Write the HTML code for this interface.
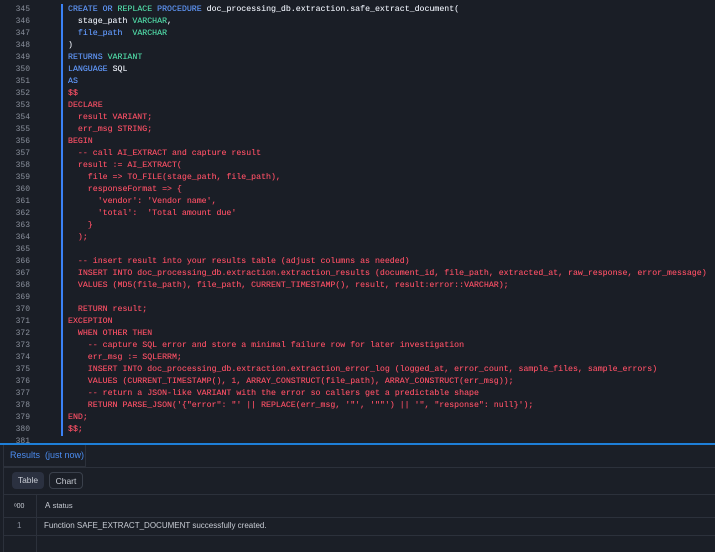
<!DOCTYPE html>
<html><head><meta charset="utf-8">
<style>
*{margin:0;padding:0;box-sizing:border-box}
html,body{width:715px;height:550px;overflow:hidden;background:#1a1e26}
.ed{position:absolute;left:0;top:4px;width:715px}
.ln{position:absolute;left:0;width:30px;text-align:right;color:#8a909c;font:8px/12px "Liberation Mono",monospace}
.cd{position:absolute;left:68px;white-space:pre;font:8.25px/12px "Liberation Mono",monospace;color:#f04d62;text-shadow:0 0 0.3px currentColor}
.bar{position:absolute;left:61px;top:4px;width:2px;height:432px;background:#3b82f6}
.b{color:#5f95f5}.g{color:#4ed3a2}.w{color:#e2e6ee}
.res{position:absolute;left:0;top:443px;width:715px;height:107px;background:#1b1f27;border-top:2px solid #1e7fd8}
.tab{position:absolute;left:3px;top:0;height:22px;width:83px;border:1px solid #2c313b;border-top:none;color:#4b8cf0;font:9px/21px "Liberation Sans",sans-serif;padding-left:6px}
.tl{position:absolute;left:3px;top:22px;right:0;height:1px;background:#2c313b}
.btn{position:absolute;top:27px;height:17px;border-radius:4px;font:8.5px/17px "Liberation Sans",sans-serif;color:#c8ccd4;text-align:center}
.hl{position:absolute;left:3px;right:0;height:1px;background:#2c313b}
.vl{position:absolute;left:36px;top:49px;width:1px;height:58px;background:#2c313b}
.txt{position:absolute;font:8px/12px "Liberation Sans",sans-serif;color:#c8ccd4}
.lb{position:absolute;left:3px;top:23px;width:1px;height:84px;background:#2c313b}
</style></head><body>
<div class="bar"></div>
<div class="ed">
<div class="ln" style="top:0">345<br>346<br>347<br>348<br>349<br>350<br>351<br>352<br>353<br>354<br>355<br>356<br>357<br>358<br>359<br>360<br>361<br>362<br>363<br>364<br>365<br>366<br>367<br>368<br>369<br>370<br>371<br>372<br>373<br>374<br>375<br>376<br>377<br>378<br>379<br>380<br>381</div>
<div class="cd" style="top:0"><span class="b">CREATE</span> <span class="b">OR</span> <span class="g">REPLACE</span> <span class="b">PROCEDURE</span> <span class="w">doc_processing_db.extraction.safe_extract_document(</span>
<span class="w">  stage_path </span><span class="g">VARCHAR</span><span class="w">,</span>
<span class="b">  file_path  </span><span class="g">VARCHAR</span>
<span class="w">)</span>
<span class="b">RETURNS</span> <span class="g">VARIANT</span>
<span class="b">LANGUAGE</span> <span class="w">SQL</span>
<span class="b">AS</span>
$$
DECLARE
  result VARIANT;
  err_msg STRING;
BEGIN
  -- call AI_EXTRACT and capture result
  result := AI_EXTRACT(
    file => TO_FILE(stage_path, file_path),
    responseFormat => {
      'vendor': 'Vendor name',
      'total':  'Total amount due'
    }
  );

  -- insert result into your results table (adjust columns as needed)
  INSERT INTO doc_processing_db.extraction.extraction_results (document_id, file_path, extracted_at, raw_response, error_message)
  VALUES (MD5(file_path), file_path, CURRENT_TIMESTAMP(), result, result:error::VARCHAR);

  RETURN result;
EXCEPTION
  WHEN OTHER THEN
    -- capture SQL error and store a minimal failure row for later investigation
    err_msg := SQLERRM;
    INSERT INTO doc_processing_db.extraction.extraction_error_log (logged_at, error_count, sample_files, sample_errors)
    VALUES (CURRENT_TIMESTAMP(), 1, ARRAY_CONSTRUCT(file_path), ARRAY_CONSTRUCT(err_msg));
    -- return a JSON-like VARIANT with the error so callers get a predictable shape
    RETURN PARSE_JSON('{"error": "' || REPLACE(err_msg, '"', '""') || '", "response": null}');
END;
$$;
</div>
</div>
<div class="res">
<div class="tab">Results&nbsp; (just now)</div>
<div class="tl"></div>
<div class="lb"></div>
<div class="btn" style="left:12px;width:32px;background:#2b3140">Table</div>
<div class="btn" style="left:49px;width:34px;border:1px solid #3a404b">Chart</div>
<div class="hl" style="top:49px"></div>
<div class="hl" style="top:72px"></div>
<div class="hl" style="top:90px"></div>
<div class="vl"></div>
<div class="txt" style="left:14px;top:56px;font-size:7px">ᵒ00</div>
<div class="txt" style="left:45px;top:55px">A&nbsp;<span style="font-size:7.5px">status</span></div>
<div class="txt" style="left:17px;top:75px;color:#8a909c">1</div>
<div class="txt" style="left:44px;top:75px">Function SAFE_EXTRACT_DOCUMENT successfully created.</div>
</div>
</body></html>
